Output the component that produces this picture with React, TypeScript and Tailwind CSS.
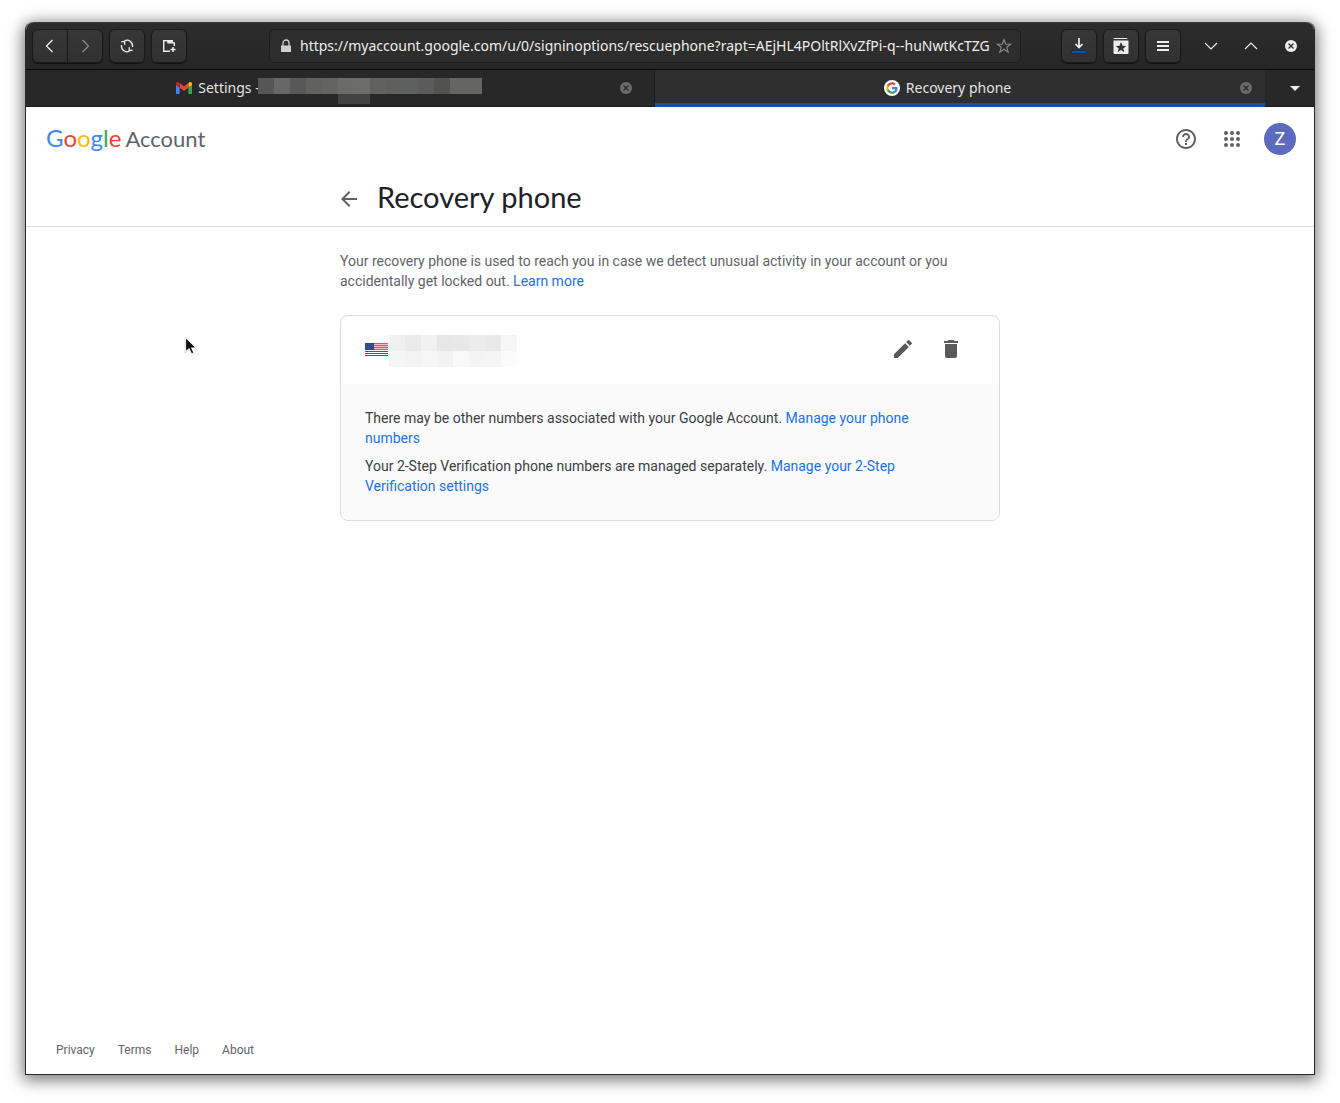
import type { ReactNode } from "react";

const TAB_MOSAIC = [
  "bg-[#565656]", "bg-[#676767]", "bg-[#585858]", "bg-[#61615f]", "bg-[#636361]", "bg-[#6b6b69]", "bg-[#6c6c6a]",
  "bg-[#61615f]", "bg-[#5f5f5e]", "bg-[#5e5f60]", "bg-[#5b5b5a]", "bg-[#52524f]", "bg-[#656563]", "bg-[#656563]",
];

const PHONE_MOSAIC = [
  "bg-[#f0f0f0]", "bg-[#eaeaea]", "bg-[#f1f1f1]", "bg-[#e7e7e7]", "bg-[#e8e8e8]", "bg-[#ececec]", "bg-[#e9e9e9]", "bg-[#f6f6f6]",
  "bg-[#f5f5f5]", "bg-[#f3f3f3]", "bg-[#f6f6f6]", "bg-[#f2f2f2]", "bg-[#f9f9f9]", "bg-[#f4f4f4]", "bg-[#f5f5f5]", "bg-[#fbfbfb]",
];

const URL_TEXT =
  "https://myaccount.google.com/u/0/signinoptions/rescuephone?rapt=AEjHL4POltRlXvZfPi-q--huNwtKcTZG";

function ToolButton({ label, shape = "rounded-md", children }: { label: string; shape?: string; children: ReactNode }) {
  return (
    <button
      type="button"
      aria-label={label}
      className={`flex h-[34px] w-9 items-center justify-center border border-[#1b1b1b] bg-linear-to-b from-[#373737] to-[#313131] text-[#eeeeec] shadow-[0_1px_1px_#111] ${shape}`}
    >
      {children}
    </button>
  );
}

function WindowButton({ label, children }: { label: string; children: ReactNode }) {
  return (
    <button type="button" aria-label={label} className="flex size-10 items-center justify-center text-[#eeeeec]">
      {children}
    </button>
  );
}

function CloseTab({ label }: { label: string }) {
  return (
    <button type="button" aria-label={label} className="size-3 shrink-0">
      <svg viewBox="0 0 12 12" className="size-3">
        <circle cx="6" cy="6" r="6" fill="#6b6b6a" />
        <path d="M3.500 3.500l5 5m0-5l-5 5" stroke="#2b2b2b" strokeWidth="1.200" />
      </svg>
    </button>
  );
}

function GmailIcon() {
  return (
    <svg viewBox="52 42 88 66" className="h-3 w-4 shrink-0">
      <path fill="#4285f4" d="M58 108h14V74L52 59v43c0 3.320 2.690 6 6 6" />
      <path fill="#34a853" d="M120 108h14c3.320 0 6-2.690 6-6V59l-20 15" />
      <path fill="#fbbc04" d="M120 48v26l20-15v-8c0-7.420-8.470-11.650-14.400-7.200" />
      <path fill="#ea4335" d="M72 74V48l24 18 24-18v26L96 92" />
      <path fill="#c5221f" d="M52 51v8l20 15V48l-5.600-4.200c-5.940-4.450-14.400-.22-14.400 7.200" />
    </svg>
  );
}

function GoogleIcon() {
  return (
    <svg viewBox="-9 -9 66 66" className="size-4 shrink-0 rounded-full bg-white">
      <path fill="#EA4335" d="M24 9.500c3.540 0 6.710 1.220 9.210 3.600l6.850-6.850C35.900 2.380 30.470 0 24 0 14.620 0 6.510 5.380 2.560 13.220l7.980 6.190C12.430 13.720 17.740 9.500 24 9.500z" />
      <path fill="#4285F4" d="M46.980 24.550c0-1.570-.15-3.090-.38-4.550H24v9.020h12.940c-.58 2.960-2.260 5.480-4.780 7.180l7.730 6c4.510-4.180 7.090-10.360 7.090-17.650z" />
      <path fill="#FBBC05" d="M10.530 28.590c-.48-1.450-.76-2.990-.76-4.590s.27-3.140.76-4.590l-7.980-6.190C.92 16.460 0 20.120 0 24c0 3.880.92 7.540 2.560 10.780l7.970-6.190z" />
      <path fill="#34A853" d="M24 48c6.480 0 11.930-2.130 15.890-5.810l-7.730-6c-2.150 1.450-4.920 2.300-8.160 2.300-6.260 0-11.570-4.220-13.470-9.910l-7.980 6.190C6.510 42.620 14.620 48 24 48z" />
    </svg>
  );
}

function Toolbar() {
  return (
    <div className="flex h-12 items-center rounded-t-lg border-t border-b border-t-[#3c3c3c] border-b-[#070707] bg-linear-to-b from-[#2c2c2c] to-[#262626] pr-[3px] pl-1.5">
      <div className="flex">
        <ToolButton label="Back" shape="rounded-l-md">
          <svg viewBox="0 0 16 16" className="size-4" fill="none" stroke="currentColor" strokeWidth="1.300">
            <path d="M10.500 2L4.500 8l6 6" />
          </svg>
        </ToolButton>
        <ToolButton label="Forward" shape="-ml-px rounded-r-md">
          <svg viewBox="0 0 16 16" className="size-4" fill="none" stroke="#919190" strokeWidth="1.200">
            <path d="M5.500 2l6 6-6 6" />
          </svg>
        </ToolButton>
      </div>
      <div className="ml-1.5 flex gap-1.5">
        <ToolButton label="Reload">
          <svg viewBox="0 0 16 16" className="size-4" fill="none" stroke="currentColor" strokeWidth="1.300">
            <path d="M5.500 2.900A5.500 5.500 0 0 1 13.400 9M2.600 7A5.500 5.500 0 0 0 10.500 13.100" />
            <path d="M2.300 3.700h3.400v3M13.700 12.300h-3.400v-3" />
          </svg>
        </ToolButton>
        <ToolButton label="New tab">
          <svg viewBox="0 0 16 16" className="size-4" fill="none" stroke="currentColor">
            <path d="M9 13.300H2.700V2.700H7v2.200h6.300V8" strokeWidth="1.400" />
            <path d="M7 2h5v3H7z" fill="currentColor" stroke="none" />
            <path d="M12 9v5M9.500 11.500h5" strokeWidth="1.400" />
          </svg>
        </ToolButton>
      </div>

      <div className="mr-10 ml-[82px] flex h-[34px] min-w-0 flex-1 items-center rounded-md border border-[#1d1d1d] bg-[#2d2d2d] px-2">
        <svg viewBox="0 0 16 16" className="size-4 shrink-0" aria-hidden="true">
          <path d="M5 8V5a3 3 0 0 1 6 0v3" fill="none" stroke="#d0d0cf" strokeWidth="1.300" />
          <path d="M3 7.500h10V14H3z" fill="#d0d0cf" />
        </svg>
        <input
          type="text"
          aria-label="Address"
          readOnly
          defaultValue={URL_TEXT}
          className="mx-1.5 min-w-0 flex-1 bg-transparent font-['Noto_Sans',sans-serif] text-sm text-[#eeeeec] outline-none"
        />
        <button type="button" aria-label="Bookmark this page">
          <svg viewBox="0 0 16 16" className="size-4" fill="none" stroke="#888887" strokeWidth="1.100">
            <path d="M8 1.500l1.700 4.700h5l-4 3 1.500 4.900L8 11.200l-4.200 2.900 1.500-4.900-4-3h5z" />
          </svg>
        </button>
      </div>

      <div className="flex gap-1.5">
        <ToolButton label="Downloads">
          <svg viewBox="0 0 16 18" className="h-[18px] w-4">
            <path d="M8 1v9M4.500 7L8 10.500 11.500 7" fill="none" stroke="currentColor" strokeWidth="1.700" />
            <rect x="0.500" y="13.500" width="15" height="3" rx="1" fill="#15539e" stroke="#0b2d58" />
          </svg>
        </ToolButton>
        <ToolButton label="Bookmarks">
          <svg viewBox="0 0 16 16" className="size-4">
            <path d="M1.500 0h12a1 1 0 0 1 1 1H.500a1 1 0 0 1 1-1z" fill="currentColor" />
            <path d="M.500 2.500h15V15a1 1 0 0 1-1 1h-13a1 1 0 0 1-1-1z" fill="currentColor" />
            <path d="M8 4l1.500 3.700 3.700.2-2.900 2.500 1 3.800L8 12.100l-3.300 2.100 1-3.800-2.900-2.500 3.700-.2z" fill="#343434" />
          </svg>
        </ToolButton>
        <ToolButton label="Main menu">
          <svg viewBox="0 0 16 16" className="size-4" stroke="currentColor" strokeWidth="2">
            <path d="M2 4h12M2 8h12M2 12h12" />
          </svg>
        </ToolButton>
      </div>
      <div className="ml-2.5 flex">
        <WindowButton label="Minimize">
          <svg viewBox="0 0 16 16" className="size-4" fill="none" stroke="currentColor" strokeWidth="1.200">
            <path d="M2 5l6 6 6-6" />
          </svg>
        </WindowButton>
        <WindowButton label="Maximize">
          <svg viewBox="0 0 16 16" className="size-4" fill="none" stroke="currentColor" strokeWidth="1.200">
            <path d="M2 11l6-6 6 6" />
          </svg>
        </WindowButton>
        <WindowButton label="Close window">
          <svg viewBox="0 0 12 12" className="size-3">
            <circle cx="6" cy="6" r="6" fill="currentColor" />
            <path d="M3.500 3.500l5 5m0-5l-5 5" stroke="#262626" strokeWidth="1.200" />
          </svg>
        </WindowButton>
      </div>
    </div>
  );
}

function TabBar() {
  return (
    <div className="flex h-[37px] font-['Noto_Sans',sans-serif] text-sm text-[#e3e3e2]">
      <div className="flex min-w-0 flex-[606_1_0%] items-center border-r border-b border-[#1c1c1c] bg-[#282828] pr-[22px]">
        <div className="flex min-w-0 flex-1 items-center justify-center pl-3">
          <GmailIcon />
          <span className="ml-1.5 whitespace-pre">Settings -</span>
          <span className="relative -ml-0.5 flex" aria-hidden="true">
            {TAB_MOSAIC.map((c, i) => (
              <span key={i} className={`-mt-1 h-4 w-4 ${c}`} />
            ))}
            <span className="absolute top-3 left-20 h-2.5 w-8 bg-[#434343]" />
          </span>
        </div>
        <CloseTab label="Close Settings tab" />
      </div>
      <div className="flex min-w-0 flex-[597_1_0%] items-center border-b-4 border-[#15539e] bg-[#2f2f2f] pt-0.5 pr-[13px]">
        <div className="flex min-w-0 flex-1 items-center justify-center gap-1.5">
          <GoogleIcon />
          <span>Recovery phone</span>
        </div>
        <CloseTab label="Close Recovery phone tab" />
      </div>
      <button
        type="button"
        aria-label="List tabs"
        className="flex w-[49px] items-center justify-center border-b border-[#1c1c1c] bg-[#282828] pl-2.5"
      >
        <svg viewBox="0 0 10 5" className="h-[5px] w-2.5">
          <path d="M0 0h10L5 5z" fill="#eeeeec" />
        </svg>
      </button>
    </div>
  );
}

function AccountHeader() {
  return (
    <header className="flex h-16 items-center justify-between pr-[18px] pl-5">
      <a href="#account" className="flex items-baseline gap-1 pb-0.5 font-['Lato',sans-serif] text-[22px] text-[#5f6368]">
        <span className="text-2xl">
          <span className="text-[#4285f4]">G</span>
          <span className="text-[#ea4335]">o</span>
          <span className="text-[#fbbc05]">o</span>
          <span className="text-[#4285f4]">g</span>
          <span className="text-[#34a853]">l</span>
          <span className="text-[#ea4335]">e</span>
        </span>
        <span>Account</span>
      </a>
      <div className="flex items-center">
        <button type="button" aria-label="Help" className="text-[#5f6368]">
          <svg viewBox="0 0 24 24" className="size-6" fill="currentColor">
            <path d="M11 18h2v-2h-2v2zm1-16C6.480 2 2 6.480 2 12s4.480 10 10 10 10-4.480 10-10S17.520 2 12 2zm0 18c-4.410 0-8-3.590-8-8s3.590-8 8-8 8 3.590 8 8-3.590 8-8 8zm0-14c-2.210 0-4 1.790-4 4h2c0-1.100.9-2 2-2s2 .9 2 2c0 2-3 1.750-3 5h2c0-2.250 3-2.500 3-5 0-2.210-1.790-4-4-4z" />
          </svg>
        </button>
        <button type="button" aria-label="Google apps" className="ml-[22px] text-[#5f6368]">
          <svg viewBox="0 0 24 24" className="size-6" fill="currentColor">
            {[6, 12, 18].map((y) => [6, 12, 18].map((x) => <circle key={`${x}-${y}`} cx={x} cy={y} r="2" />))}
          </svg>
        </button>
        <button
          type="button"
          aria-label="Google Account"
          className="ml-5 flex size-8 items-center justify-center rounded-full bg-[#5c6bc0] font-['Roboto',sans-serif] text-lg text-white"
        >
          Z
        </button>
      </div>
    </header>
  );
}

function UsFlag() {
  return (
    <svg viewBox="0 0 23 13" className="h-[13px] w-[23px]" role="img" aria-label="United States">
      <rect width="23" height="13" fill="#fff" />
      {[0, 2, 4, 6, 8, 10, 12].map((y) => (
        <rect key={y} y={y} width="23" height="1" fill={y < 7 ? "#d55a70" : "#c8203f"} />
      ))}
      {[1, 3, 5].map((y) => (
        <rect key={y} y={y} width="23" height="1" fill="#efbcc5" />
      ))}
      <rect width="9" height="7" fill="#254a8c" />
      <path d="M1 1.500h7M1 3.500h7M1 5.500h7" stroke="#4a69a2" strokeWidth=".6" strokeDasharray="1 1" />
    </svg>
  );
}

function PhoneCard() {
  return (
    <section className="mt-6 overflow-hidden rounded-lg border border-[#dadce0]">
      <div className="flex h-[68px] items-center justify-between px-6 pb-0.5">
        <div className="flex items-center gap-px">
          <UsFlag />
          <div className="mt-1 grid grid-cols-8" aria-hidden="true">
            {PHONE_MOSAIC.map((c, i) => (
              <span key={i} className={`size-4 ${c}`} />
            ))}
          </div>
        </div>
        <div className="mr-3 flex gap-6 text-[#5a5a5a]">
          <button type="button" aria-label="Edit phone number">
            <svg viewBox="0 0 24 24" className="size-6" fill="currentColor">
              <path d="M3 17.250V21h3.750L17.810 9.940l-3.750-3.750L3 17.250zM20.710 7.040a.996.996 0 0 0 0-1.410l-2.340-2.340a.996.996 0 0 0-1.410 0l-1.830 1.830 3.750 3.750 1.830-1.830z" />
            </svg>
          </button>
          <button type="button" aria-label="Remove phone number">
            <svg viewBox="0 0 24 24" className="size-6" fill="currentColor">
              <path d="M6 19c0 1.100.9 2 2 2h8c1.100 0 2-.9 2-2V7H6v12zM19 4h-3.500l-1-1h-5l-1 1H5v2h14V4z" />
            </svg>
          </button>
        </div>
      </div>
      <div className="flex flex-col gap-2 bg-[#fafafa] py-6 pr-12 pl-6 text-sm text-[#3c4043]">
        <p>
          There may be other numbers associated with your Google Account.{" "}
          <a href="#phones" className="text-[#1a73e8]">Manage your phone numbers</a>
        </p>
        <p>
          Your 2-Step Verification phone numbers are managed separately.{" "}
          <a href="#two-step" className="text-[#1a73e8]">Manage your 2-Step Verification settings</a>
        </p>
      </div>
    </section>
  );
}

export default function App() {
  return (
    <div className="relative flex min-h-screen flex-col bg-white px-[25px] pt-[22px] pb-7">
      <div className="flex flex-1 flex-col rounded-t-lg border-x border-b border-[#26292b] bg-white shadow-[0_3px_16px_2px_rgba(0,0,0,0.55)]">
        <Toolbar />
        <TabBar />
        <div className="flex flex-1 flex-col font-['Roboto',sans-serif]">
          <AccountHeader />
          <div className="flex h-14 items-center border-b border-[#dadce0]">
            <div className="mx-auto flex w-full max-w-[660px] items-center">
              <button type="button" aria-label="Back to account" className="-ml-[3px] text-[#5f6368]">
                <svg viewBox="0 0 24 24" className="size-6" fill="currentColor">
                  <path d="M20 11H7.830l5.590-5.590L12 4l-8 8 8 8 1.410-1.410L7.830 13H20v-2z" />
                </svg>
              </button>
              <h1 className="ml-4 pb-1 font-['Lato',sans-serif] text-[29px] leading-9 text-[#202124]">Recovery phone</h1>
            </div>
          </div>
          <main className="mx-auto w-full max-w-[660px] pt-6">
            <p className="text-sm text-[#5f6368]">
              Your recovery phone is used to reach you in case we detect unusual activity in your account or you
              accidentally get locked out.{" "}
              <a href="#learn" className="text-[#1a73e8]">Learn more</a>
            </p>
            <PhoneCard />
          </main>
          <footer className="mt-auto flex gap-[23px] px-[30px] pb-4 text-xs text-[#5f6368]">
            <a href="#privacy">Privacy</a>
            <a href="#terms">Terms</a>
            <a href="#help">Help</a>
            <a href="#about">About</a>
          </footer>
        </div>
      </div>
      <svg viewBox="0 0 14 20" className="pointer-events-none absolute top-[336px] left-[184px] h-5 w-3.5" aria-hidden="true">
        <path d="M1.500 1v15l3.500-3 2.500 5 2.500-1.200L7.800 12H12.500z" fill="#111" stroke="#fff" strokeWidth="1.200" />
        <path d="M1 1v16l4-3.200M7.500 18.500l3.200-1.700" fill="none" stroke="#aaa" strokeWidth=".4" />
      </svg>
    </div>
  );
}
